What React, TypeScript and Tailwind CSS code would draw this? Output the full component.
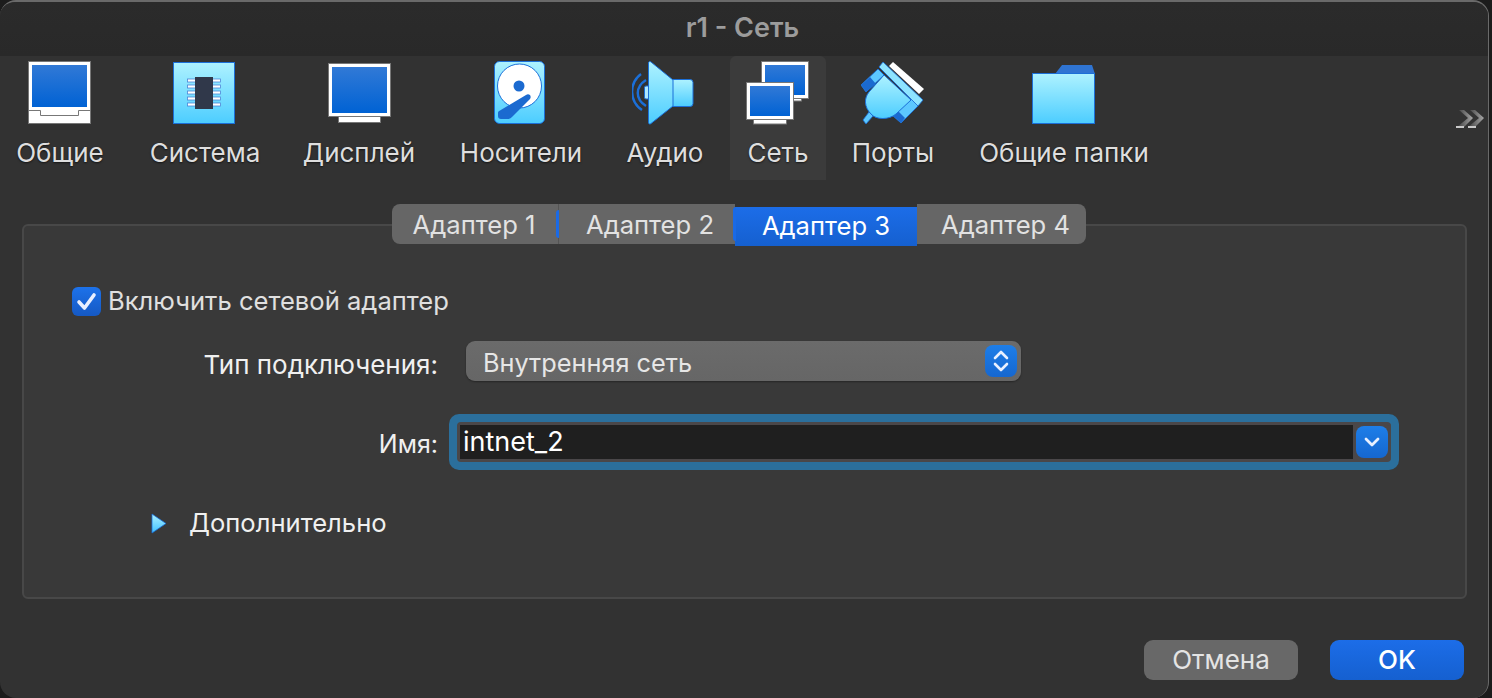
const sans = "font-['Inter','Noto_Sans',sans-serif]";

function Grad({ id, from, to }: { id: string; from: string; to: string }) {
  return (
    <linearGradient id={id} x1="0" y1="0" x2="0" y2="1">
      <stop offset="0" stopColor={from} />
      <stop offset="1" stopColor={to} />
    </linearGradient>
  );
}

function GeneralIcon() {
  return (
    <svg width="64" height="64" viewBox="28 62 64 64">
      <defs><Grad id="g1" from="#3179d6" to="#0062d4" /></defs>
      <rect x="28.5" y="62.5" width="62" height="62" fill="#fff" stroke="#777" />
      <rect x="32" y="66" width="55" height="42" fill="url(#g1)" />
      <path d="M28 111.5H40.5V116.5H78.5V111.5H91" fill="none" stroke="#777" />
    </svg>
  );
}

function SystemIcon() {
  const ys = [82, 88, 94, 100, 106];
  return (
    <svg className="-ml-[2px]" width="64" height="64" viewBox="172 62 64 64">
      <defs><Grad id="g2" from="#aef2ff" to="#4ccdff" /></defs>
      <rect x="173.5" y="63.5" width="61" height="61" fill="url(#g2)" stroke="#1b6fd8" />
      {ys.map((y) => (
        <g key={y}>
          <rect x="187.5" y={y - 2} width="8" height="3" fill="#fff" stroke="#4a86d8" strokeWidth="0.8" />
          <rect x="212.5" y={y - 2} width="8" height="3" fill="#fff" stroke="#4a86d8" strokeWidth="0.8" />
        </g>
      ))}
      <rect x="195" y="78" width="18" height="32" fill="#30384a" />
    </svg>
  );
}

function DisplayIcon() {
  return (
    <svg className="ml-[2px]" width="64" height="62" viewBox="328 64 64 62">
      <defs><Grad id="g3" from="#3179d6" to="#0062d4" /></defs>
      <rect x="338.5" y="112" width="42" height="11.5" fill="#fff" stroke="#777" />
      <rect x="328.5" y="64.5" width="62" height="53" fill="#fff" stroke="#777" />
      <rect x="332" y="68" width="55" height="46" fill="url(#g3)" />
    </svg>
  );
}

function StorageIcon() {
  return (
    <svg className="-ml-[2px]" width="52" height="64" viewBox="494 62 52 64">
      <defs><Grad id="g4" from="#aef2ff" to="#4ccdff" /></defs>
      <rect x="494.5" y="62.5" width="50" height="62" rx="5" fill="url(#g4)" stroke="#1b6fd8" />
      <circle cx="519.5" cy="87" r="22" fill="#fff" stroke="#1b6fd8" />
      <circle cx="519" cy="87" r="5.5" fill="#1b6ad0" />
      <path d="M526 96C529 94 532 97 530 100L512 118C510.5 119.5 509 120 507 120H501C499 120 498 119 498 117V114C498 112.5 498.8 112 500 111.5Z" fill="#1b6ad0" />
    </svg>
  );
}

function AudioIcon() {
  return (
    <svg className="-ml-[5px]" width="62" height="64" viewBox="632 62 62 64">
      <defs><Grad id="g5" from="#aef2ff" to="#4ccdff" /></defs>
      <path d="M641 75C629 84 629 102 642 111" fill="none" stroke="#1b6fd8" strokeWidth="2.4" />
      <path d="M646 81C635 88 635 100 646 107" fill="none" stroke="#1b6fd8" strokeWidth="2.4" />
      <rect x="644.5" y="87" width="6" height="13" rx="1.5" fill="#aee8ff" stroke="#1b6fd8" />
      <rect x="670" y="80.5" width="23" height="27" rx="3" fill="url(#g5)" stroke="#1b6fd8" />
      <path d="M648.5 64C648.5 62.5 650 62 651 63L673 81V107L651 124.5C650 125.5 648.5 125 648.5 123.5Z" fill="url(#g5)" stroke="#1b6fd8" strokeLinejoin="round" />
    </svg>
  );
}

function NetworkIcon() {
  return (
    <svg width="64" height="64" viewBox="746 62 64 64">
      <defs><Grad id="g6" from="#3179d6" to="#0062d4" /></defs>
      <rect x="768.5" y="96" width="33" height="6" fill="#fff" stroke="#777" />
      <rect x="761.5" y="62.5" width="47" height="37" fill="#fff" stroke="#777" />
      <rect x="765" y="66" width="40" height="30" fill="url(#g6)" />
      <rect x="753.5" y="117" width="33" height="8" fill="#fff" stroke="#777" />
      <rect x="746.5" y="83.5" width="47" height="37" fill="#fff" stroke="#777" />
      <rect x="750" y="87" width="40" height="30" fill="url(#g6)" />
    </svg>
  );
}

function PortsIcon() {
  return (
    <svg width="64" height="64" viewBox="860 62 64 64">
      <defs><Grad id="g7" from="#aef2ff" to="#4ccdff" /></defs>
      <path d="M892 63L923 90L918 95L888 67Z" fill="#fff" />
      <path d="M877 70L860 86L865 93L883 76Z" fill="#5cc8ff" stroke="#1b6fd8" strokeWidth="0.8" />
      <path d="M860 86L869 78L875 85L865 93Z" fill="#1b6ad0" />
      <path d="M868 113L872 117L865 125L862 121Z" fill="#5cc8ff" stroke="#1b6fd8" strokeWidth="0.8" />
      <path d="M910 100L917 107L900 124L891 116Z" fill="#5cc8ff" stroke="#1b6fd8" strokeWidth="0.8" />
      <path d="M891 116L896 111L904 119L900 124Z" fill="#1b6ad0" />
      <path d="M882 63L922 101L917 107L878 68Z" fill="#8ee4ff" stroke="#1b6fd8" strokeWidth="0.8" />
      <path d="M883 76L910 101L895 115C888 121 875 121 870 115C863 108 863 99 868 93Z" fill="url(#g7)" stroke="#1b6fd8" />
    </svg>
  );
}

function FolderIcon() {
  return (
    <svg width="64" height="60" viewBox="1032 64 64 60">
      <defs><Grad id="g8" from="#aef2ff" to="#4ccdff" /></defs>
      <path d="M1055 73L1062 64H1092L1095 73Z" fill="#2f74d2" />
      <rect x="1032.5" y="72.5" width="62" height="50" fill="url(#g8)" stroke="#1b6fd8" />
    </svg>
  );
}

const items = [
  { label: "Общие", icon: <GeneralIcon />, cls: "ml-[12px] w-[96px]" },
  { label: "Система", icon: <SystemIcon />, cls: "ml-[33px] w-[128px]" },
  { label: "Дисплей", icon: <DisplayIcon />, cls: "ml-[25px] w-[130px]" },
  { label: "Носители", icon: <StorageIcon />, cls: "ml-[27px] w-[140px]" },
  { label: "Аудио", icon: <AudioIcon />, cls: "ml-[26px] w-[96px]" },
  { label: "Сеть", icon: <NetworkIcon />, cls: "ml-[17px] w-[96px] bg-[#3b3b3b] rounded-t-[6px]" },
  { label: "Порты", icon: <PortsIcon />, cls: "ml-[19px] w-[96px]" },
  { label: "Общие папки", icon: <FolderIcon />, cls: "ml-[27px] w-[192px]" },
];

function Toolbar() {
  return (
    <div className="relative flex h-[124px] bg-[#323232]">
      {items.map((it) => (
        <div key={it.label} className={`flex flex-col items-center ${it.cls}`}>
          <div className="flex h-[70px] items-end justify-center pb-[1px]">{it.icon}</div>
          <div className="mt-[11px] whitespace-nowrap text-[26px] leading-[32px] text-[#dedede] [text-shadow:0_1px_2px_rgba(0,0,0,0.6)]">
            {it.label}
          </div>
        </div>
      ))}
      <svg className="absolute left-[1456px] top-[54px]" width="30" height="20" viewBox="0 0 30 20">
        <defs>
          <linearGradient id="chev" x1="0" y1="0" x2="1" y2="0">
            <stop offset="0" stopColor="#3c3c3c" />
            <stop offset="1" stopColor="#a8a8a8" />
          </linearGradient>
        </defs>
        <path d="M3 0H8L17 8L8 17H1L12 8Z" fill="url(#chev)" />
        <path d="M14 0H19L28 8L19 17H12L23 8Z" fill="url(#chev)" />
        <path d="M0 16H8V18H0ZM12 16H20V18H12Z" fill="#c8c8c8" />
      </svg>
    </div>
  );
}

function Tabs() {
  return (
    <div className="relative z-10 ml-[392px] flex h-[43px] items-start text-[25.6px] text-[#e2e2e2]">
      <div className="relative flex h-[40px] w-[166px] items-center justify-center rounded-l-[8px] bg-[#666666] pr-[2px] pt-[3px]">
        Адаптер 1
        <span className="absolute right-[-1px] top-[6px] h-[28px] w-[3px] rounded-l-[3px] bg-[#1a6ae6]" />
      </div>
      <div className="flex h-[40px] w-[177px] items-center justify-center border-l border-[#555] bg-[#666666] pl-[6px] pt-[3px]">
        Адаптер 2
      </div>
      <div className="relative mt-[3px] flex h-[39px] w-[182px] items-center justify-center bg-gradient-to-b from-[#1c6de8] to-[#1560d0] text-white">
        Адаптер 3
        <span className="absolute left-[-2px] top-0 h-[34px] w-[3px] rounded-l-[4px] bg-[#1a6ae6]" />
      </div>
      <div className="flex h-[40px] w-[169px] items-center justify-center rounded-r-[8px] bg-[#666666] pl-[8px] pt-[3px]">Адаптер 4</div>
    </div>
  );
}

function Panel() {
  return (
    <div className="mx-[22px] -mt-[23px] h-[375px] w-[1445px] rounded-[6px] border-2 border-[#484848] bg-[#393939] text-[25.6px] text-[#e0e0e0]">
      <div className="ml-[48px] mt-[60px] flex h-[30px] items-center">
        <div className="flex h-[29px] w-[29px] items-center justify-center rounded-[6px] bg-gradient-to-b from-[#1d72ea] to-[#1559c4]">
          <svg width="21" height="19" viewBox="0 0 21 19">
            <path d="M3 10L8.5 16L18 3" fill="none" stroke="#e8efff" strokeWidth="3.6" strokeLinecap="round" strokeLinejoin="round" />
          </svg>
        </div>
        <span className="ml-[7px]">Включить сетевой адаптер</span>
      </div>

      <div className="mt-[25px] flex h-[40px] items-center">
        <span className="w-[414px] pt-[7px] text-right text-[26px] text-[#f0f0f0]">Тип подключения:</span>
        <div className="ml-[28px] flex h-[40px] w-[555px] items-center justify-between rounded-[9px] bg-gradient-to-b from-[#6b6b6b] to-[#666666] pl-[17px] pr-[4px] shadow-[0_1px_2px_rgba(0,0,0,0.35)]">
          <span className="pt-[3px] text-[25.3px] text-[#e6e6e6]">Внутренняя сеть</span>
          <div className="flex h-[32px] w-[32px] items-center justify-center rounded-[8px] bg-gradient-to-b from-[#1e7ee8] to-[#1567d0]">
            <svg width="18" height="26" viewBox="0 0 18 26">
              <path d="M3 10L9 4L15 10M3 16L9 22L15 16" fill="none" stroke="#e8f0ff" strokeWidth="2.6" strokeLinecap="round" strokeLinejoin="round" />
            </svg>
          </div>
        </div>
      </div>

      <div className="mt-[33px] flex h-[56px] items-center">
        <span className="w-[414px] pt-[6px] text-right text-[25px] text-[#f0f0f0]">Имя:</span>
        <div className="ml-[11px] flex h-[56px] w-[950px] items-center rounded-[10px] bg-[#2b6f9c] p-[8px]">
          <div className="flex h-[40px] w-full items-center justify-between rounded-[4px] border-y-[3px] border-l-[3px] border-y-[#4a4749] border-l-[#4a4749] bg-[#4a4749] pr-[3px]">
            <div className="flex h-full w-[893px] items-center bg-[#1f1f1f] pl-[3px] pt-[1px] text-[27px] text-white">intnet_2</div>
            <div className="flex h-[32px] w-[32px] items-center justify-center rounded-[8px] bg-gradient-to-b from-[#1e7ee8] to-[#1567d0]">
              <svg width="18" height="12" viewBox="0 0 18 12">
                <path d="M3 3L9 9L15 3" fill="none" stroke="#e8f0ff" strokeWidth="2.8" strokeLinecap="round" strokeLinejoin="round" />
              </svg>
            </div>
          </div>
        </div>
      </div>

      <div className="ml-[127px] mt-[38px] flex h-[30px] items-center">
        <svg width="16" height="21" viewBox="0 0 16 21">
          <defs><Grad id="g9" from="#aef2ff" to="#3fc0ff" /></defs>
          <path d="M1 1L15 10.5L1 20Z" fill="url(#g9)" stroke="#1b6fd8" strokeWidth="0.8" />
        </svg>
        <span className="ml-[22px] text-[#f0f0f0]">Дополнительно</span>
      </div>
    </div>
  );
}

export default function App() {
  return (
    <div className={`h-[698px] w-[1492px] overflow-hidden bg-[#1c1c1c] pr-[3px] ${sans}`}>
      <div className="h-[698px] w-[1489px] overflow-hidden rounded-[16px] border-r border-t-2 border-[#6a6a6a] bg-[#323232]">
        <div className="flex h-[54px] items-center justify-center bg-gradient-to-b from-[#2b2b2b] to-[#292929] pb-[2px] pr-[3px] text-[27px] font-semibold text-[#9c9c9c]">
          r1 - Сеть
        </div>
        <Toolbar />
        <div className="mt-[24px]">
          <Tabs />
          <Panel />
        </div>
        <div className="mt-[41px] flex justify-end gap-[32px] pr-[24px] text-[26px]">
          <button className="h-[40px] w-[154px] rounded-[9px] bg-[#686868] pb-[3px] text-[#e4e4e4]">Отмена</button>
          <button className="h-[40px] w-[134px] rounded-[9px] bg-gradient-to-b from-[#1c6de8] to-[#1560d0] pb-[3px] font-medium text-white">OK</button>
        </div>
      </div>
    </div>
  );
}
